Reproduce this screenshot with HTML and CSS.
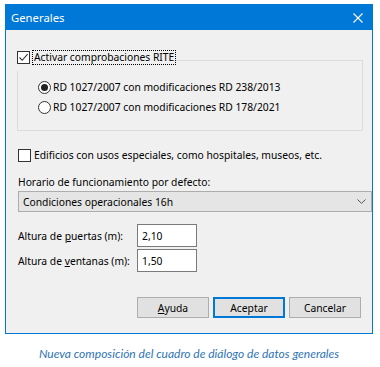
FILE: index.html
```html
<!DOCTYPE html>
<html lang="es">
<head>
    <meta charset="UTF-8">
    <title>Generales</title>
    <link rel="stylesheet" href="styles.css">
</head>
<body>
    <div class="dialog">
        <div class="titlebar">
            <span class="title">Generales</span>
            <svg class="close" width="10" height="10" viewBox="0 0 10 10">
                <path d="M0.5 0.5 L9.5 9.5 M9.5 0.5 L0.5 9.5" stroke="#fff" stroke-width="1.1" fill="none"/>
            </svg>
        </div>

        <div class="content">
            <fieldset class="group">
                <legend>
                    <span class="check checked">
                        <svg width="11" height="11" viewBox="0 0 11 11">
                            <path d="M1.5 5.5 L4.2 8.3 L9.6 2.2" stroke="#333" stroke-width="1.1" fill="none"/>
                        </svg>
                    </span>
                    <span class="focus">Activar comprobaciones RITE</span>
                </legend>
                <div class="group-body">
                    <div class="option">
                        <span class="radio selected"></span>
                        <span>RD 1027/2007 con modificaciones RD 238/2013</span>
                    </div>
                    <div class="option">
                        <span class="radio"></span>
                        <span>RD 1027/2007 con modificaciones RD 178/2021</span>
                    </div>
                </div>
            </fieldset>

            <div class="option special">
                <span class="check"></span>
                <span>Edificios con usos especiales, como hospitales, museos, etc.</span>
            </div>

            <div class="label">Horario de funcionamiento por defecto:</div>
            <div class="combo">
                <span>Condiciones operacionales 16h</span>
                <svg width="9" height="5" viewBox="0 0 9 5">
                    <path d="M0.5 0.5 L4.5 4.3 L8.5 0.5" stroke="#555" stroke-width="1" fill="none"/>
                </svg>
            </div>

            <div class="fields">
                <div class="field">
                    <span class="field-label">Altura de <u>p</u>uertas (m):</span>
                    <span class="input">2,10</span>
                </div>
                <div class="field">
                    <span class="field-label">Altura de <u>v</u>entanas (m):</span>
                    <span class="input">1,50</span>
                </div>
            </div>

            <div class="buttons">
                <button><u>A</u>yuda</button>
                <button class="default">Aceptar</button>
                <button>Cancelar</button>
            </div>
        </div>
    </div>

    <p class="caption">Nueva composición del cuadro de diálogo de datos generales</p>
</body>
</html>
```

FILE: styles.css
```css
body {
    margin: 0;
    padding: 4px 0 0 5px;
    background: #fff;
    font-family: "Noto Sans", "Open Sans", sans-serif;
    font-size: 10.3px;
    color: #000;
}
.dialog {
    width: 366px;
    height: 328px;
    border: 1px solid #0078d7;
    background: #f0f0f0;
    display: flex;
    flex-direction: column;
}
.titlebar {
    height: 25px;
    background: #0078d7;
    color: #fff;
    display: flex;
    align-items: center;
    justify-content: space-between;
    padding: 0 9px 0 5px;
    font-size: 11.3px;
}
.close {
    margin-top: 1px;
}
.content {
    padding: 20px 10px 0 11px;
    display: flex;
    flex-direction: column;
}
.group {
    margin: 0;
    padding: 0;
    border: 1px solid #dcdcdc;
    width: 344px;
    box-sizing: content-box;
}
.group legend {
    padding: 0 0 6px 0;
    display: flex;
    align-items: center;
    margin-left: -1px;
}
.check {
    width: 11px;
    height: 11px;
    border: 1px solid #333;
    background: #fff;
    display: inline-flex;
    flex-shrink: 0;
}
.focus {
    margin-left: 2px;
    padding: 0 1px;
    border: 1px dotted #000;
    line-height: 13px;
}
.group-body {
    padding: 6px 0 13px 20px;
}
.option {
    display: flex;
    align-items: center;
    height: 20px;
    gap: 2px;
}
.radio {
    width: 11px;
    height: 11px;
    border: 1px solid #333;
    border-radius: 50%;
    background: #fff;
    display: inline-flex;
    align-items: center;
    justify-content: center;
}
.radio.selected::after {
    content: "";
    width: 7px;
    height: 7px;
    border-radius: 50%;
    background: #222;
}
.special {
    margin-top: 14px;
    margin-left: 1px;
    gap: 3px;
}
.label {
    margin-top: 10px;
    margin-left: 1px;
    line-height: 15px;
}
.combo {
    margin-top: 1px;
    height: 19px;
    width: 343px;
    border: 1px solid #adadad;
    background: #e5e5e5;
    display: flex;
    align-items: center;
    justify-content: space-between;
    padding: 0 5px 0 4px;
    box-sizing: content-box;
    margin-left: 1px;
}
.fields {
    margin-top: 12px;
    margin-left: 1px;
    display: flex;
    flex-direction: column;
    gap: 2px;
}
.field {
    display: flex;
    align-items: center;
}
.field-label {
    width: 119px;
}
.input {
    width: 54px;
    height: 21px;
    border: 1px solid #7a7a7a;
    background: #fff;
    padding-left: 4px;
    display: flex;
    align-items: center;
}
.buttons {
    margin-top: 25px;
    display: flex;
    justify-content: flex-end;
    gap: 4px;
    padding-right: 1px;
}
button {
    width: 72px;
    height: 21px;
    border: 1px solid #adadad;
    background: #e1e1e1;
    font-family: inherit;
    font-size: 10.3px;
    color: #000;
    padding: 0;
}
button.default {
    border: 2px solid #0078d7;
}
.caption {
    margin: 12px 0 0 0;
    width: 368px;
    text-align: center;
    font-style: italic;
    font-size: 12px;
    color: #2e74b5;
    font-family: "Lato", "Noto Sans", sans-serif;
}
```
